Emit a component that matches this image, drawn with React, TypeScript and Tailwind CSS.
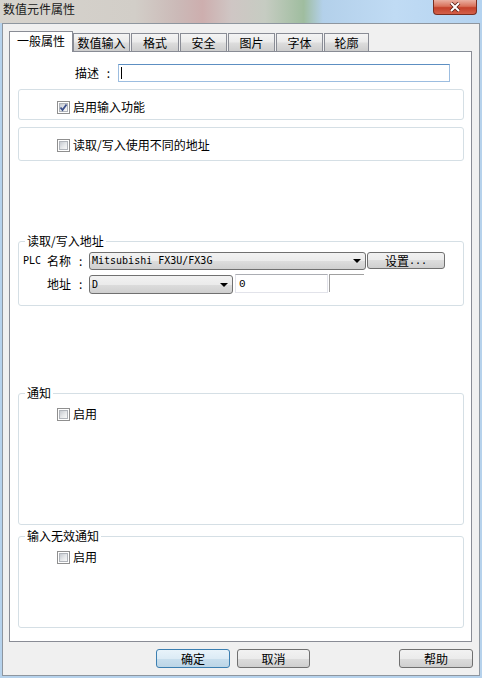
const btnBg =
  "bg-[linear-gradient(#f2f2f2_0%,#ebebeb_50%,#dddddd_50%,#cfcfcf_100%)]";

const tabs = [
  { label: "数值输入", cls: "w-[57px]" },
  { label: "格式", cls: "w-[48px] ml-[1px]" },
  { label: "安全", cls: "w-[47px] ml-[1px]" },
  { label: "图片", cls: "w-[47px] ml-[1px]" },
  { label: "字体", cls: "w-[47px] ml-[1px]" },
  { label: "轮廓", cls: "w-[45px] ml-[1px]" },
];

const CheckBox = ({ checked = false }: { checked?: boolean }) => (
  <span className="relative block size-[13px] shrink-0 border border-[#8f8f8f] bg-white p-px">
    <span className="block size-full border border-[#b0b4ba] bg-[linear-gradient(135deg,#c6cad0_0%,#e6e8ea_55%,#f8f8f8_100%)]" />
    {checked && (
      <svg className="absolute left-[1px] top-[1px]" width="9" height="9" viewBox="0 0 9 9">
        <path d="M1.5 4.5 3.5 7 7.5 1.5" fill="none" stroke="#3b4f8c" strokeWidth="1.8" />
      </svg>
    )}
  </span>
);

const CheckRow = ({ label, checked }: { label: string; checked?: boolean }) => (
  <div className="flex items-center pl-[38px]">
    <CheckBox checked={checked} />
    <span className="ml-[3px] text-[12px] leading-[14px]">{label}</span>
  </div>
);

const Arrow = () => (
  <svg width="8" height="4" viewBox="0 0 8 4" className="shrink-0">
    <path d="M0 0h8L4 4z" fill="#000" />
  </svg>
);

const Button = ({ label, cls, primary }: { label: string; cls: string; primary?: boolean }) => (
  <div
    className={
      primary
        ? `${cls} h-[19px] rounded-[3px] border border-[#3c7fb1] bg-[linear-gradient(#e8f3fa_0%,#dcebf5_50%,#c9dfee_50%,#bcd5e6_100%)] flex items-center justify-center text-[12px] leading-[14px]`
        : `${cls} h-[19px] rounded-[3px] border border-[#707070] ${btnBg} flex items-center justify-center text-[12px] leading-[14px]`
    }
  >
    {label}
  </div>
);

const mono = "font-['DejaVu_Sans_Mono',monospace] text-[10px] leading-[12px]";

export default function App() {
  return (
    <div className="w-[482px] h-[678px] overflow-hidden bg-[#b6d2ec] font-['Noto_Sans_CJK_SC',sans-serif] text-black">
      {/* title bar */}
      <div className="h-[23px] flex items-start justify-between pl-[3px] pr-[5px] bg-[linear-gradient(90deg,#d6d3cd_0%,#d2cec8_28%,#cbb9b7_37%,#cdaeae_42%,#cfc6c4_48%,#c6ccc2_55%,#9fbd9f_63%,#b3d0ea_67%,#c0dbf4_82%,#b4d3f0_100%)]">
        <span className="pt-[2px] text-[12px] leading-[14px] text-[#1a1a1a]">数值元件属性</span>
        <div className="w-[44px] h-[15px] rounded-b-[4px] border border-t-0 border-[#7a2e20] bg-[linear-gradient(#eab0a2_0%,#d9725b_45%,#c4412a_55%,#d3604a_100%)] flex items-center justify-center">
          <svg width="12" height="10" viewBox="0 0 12 10">
            <path d="M2 1 10 9M10 1 2 9" stroke="#5a2218" strokeWidth="3.6" />
            <path d="M2 1 10 9M10 1 2 9" stroke="#fff" strokeWidth="2" />
          </svg>
        </div>
      </div>

      {/* client area */}
      <div className="ml-[2px] w-[478px] h-[653px] border border-[#8e969f] bg-[#f0f0f0] pl-[6px] pt-[7px]">
        {/* tabs */}
        <div className="relative z-10 flex items-end h-[20px]">
          <div className="w-[64px] h-[21px] -mb-px border border-b-0 border-[#898c95] bg-white flex items-center justify-center text-[12px] leading-[14px] pb-[2px]">
            一般属性
          </div>
          {tabs.map((t) => (
            <div
              key={t.label}
              className={`${t.cls} h-[18px] border border-b-0 border-[#898c95] bg-[linear-gradient(#f4f4f4_0%,#ebebeb_45%,#dcdcdc_55%,#cdcdcd_100%)] flex items-center justify-center text-[12px] leading-[14px]`}
            >
              {t.label}
            </div>
          ))}
        </div>

        {/* panel */}
        <div className="w-[463px] h-[591px] border border-[#898c95] bg-white">
          <div className="mt-[12px] flex items-center h-[18px] pl-[65px]">
            <span className="text-[12px] leading-[14px]">描述</span>
            <span className="w-[19px] text-center text-[12px] leading-[14px]">:</span>
            <div className="w-[332px] h-[18px] border border-[#9cbde0] border-t-[#5d8fc2] bg-white flex items-center pl-[2px]">
              <span className="w-px h-[12px] bg-black" />
            </div>
          </div>

          <div className="mt-[7px] ml-[8px] w-[446px] h-[31px] rounded-[3px] border border-[#d5dfe5] pt-[10px]">
            <CheckRow label="启用输入功能" checked />
          </div>

          <div className="mt-[7px] ml-[8px] w-[446px] h-[34px] rounded-[3px] border border-[#d5dfe5] pt-[10px]">
            <CheckRow label="读取/写入使用不同的地址" />
          </div>

          <fieldset className="mt-[73px] ml-[8px] w-[446px] h-[72px] rounded-[3px] border border-[#d5dfe5]">
            <legend className="ml-[6px] px-[2px] text-[12px] leading-[14px]">读取/写入地址</legend>
            <div className="mt-[4px] flex items-start pl-[4px]">
              <div className="w-[66px] h-[18px] flex items-center">
                <span className={mono}>PLC</span>
                <span className="ml-[6px] text-[12px] leading-[14px]">名称</span>
                <span className="ml-[8px] text-[12px] leading-[14px]">:</span>
              </div>
              <div className={`w-[277px] h-[18px] rounded-[3px] border border-[#707070] ${btnBg} flex items-center pl-[2px] pr-[4px]`}>
                <span className={`flex-1 ${mono}`}>Mitsubishi FX3U/FX3G</span>
                <Arrow />
              </div>
              <div className={`ml-[1px] w-[78px] h-[17px] rounded-[3px] border border-[#707070] ${btnBg} flex items-center justify-center`}>
                <span className="text-[12px] leading-[14px]">设置</span>
                <span className={mono}>...</span>
              </div>
            </div>
            <div className="mt-[4px] flex items-start pl-[4px]">
              <div className="w-[66px] h-[20px] flex items-center pl-[24px]">
                <span className="text-[12px] leading-[14px]">地址</span>
                <span className="ml-[8px] text-[12px] leading-[14px]">:</span>
              </div>
              <div className={`mt-px w-[144px] h-[19px] rounded-[3px] border border-[#707070] ${btnBg} flex items-center pl-[2px] pr-[4px]`}>
                <span className={`flex-1 ${mono}`}>D</span>
                <Arrow />
              </div>
              <div className="ml-[2px] w-[93px] h-[19px] border border-[#e2e3ea] border-t-[#abadb3] bg-white flex items-center pl-[3px]">
                <span className="font-['Liberation_Mono',monospace] text-[11px] leading-[12px]">0</span>
              </div>
              <div className="ml-[1px] w-[35px] h-[18px] border-l border-t border-[#a0a0a0] bg-white" />
            </div>
          </fieldset>

          <fieldset className="mt-[80px] ml-[8px] w-[446px] h-[139px] rounded-[3px] border border-[#d5dfe5]">
            <legend className="ml-[6px] px-[2px] text-[12px] leading-[14px]">通知</legend>
            <div className="mt-[7px]">
              <CheckRow label="启用" />
            </div>
          </fieldset>

          <fieldset className="mt-[4px] ml-[8px] w-[446px] h-[99px] rounded-[3px] border border-[#d5dfe5]">
            <legend className="ml-[6px] px-[2px] text-[12px] leading-[14px]">输入无效通知</legend>
            <div className="mt-[7px]">
              <CheckRow label="启用" />
            </div>
          </fieldset>
        </div>

        {/* buttons */}
        <div className="mt-[7px] flex pl-[147px]">
          <Button label="确定" cls="w-[74px]" primary />
          <Button label="取消" cls="w-[73px] ml-[7px]" />
          <Button label="帮助" cls="w-[74px] ml-[89px]" />
        </div>
      </div>
    </div>
  );
}
